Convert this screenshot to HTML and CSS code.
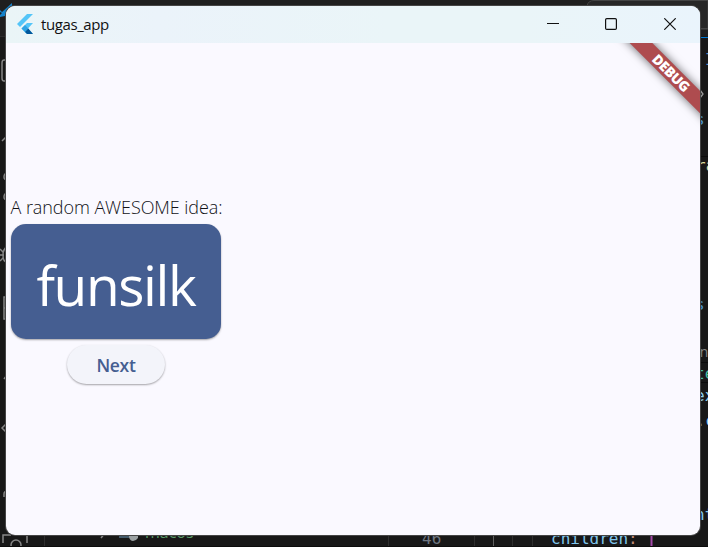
FILE: index.html
```html
<!DOCTYPE html>
<html lang="en">
<head>
<meta charset="utf-8">
<title>tugas_app</title>
<link rel="stylesheet" href="styles.css">
</head>
<body>
<svg class="editor" width="708" height="547" viewBox="0 0 708 547" aria-hidden="true">
  <rect width="708" height="547" fill="#181818"/>
  <rect width="708" height="36" fill="#1f1f1f"/>
  <path d="M587 6Q588 .5 594 .5H708V29H587z" fill="#272727" stroke="#444"/>
  <path d="M0 36.5H6" stroke="#2b2b2b"/>
  <path d="M0 10L2 12L12 3V20L5 16L0 17V15L2 13L0 12z" fill="#1382ca"/>
  <path d="M700 28.5H708" stroke="#454545"/>
  <path d="M700 37.5H708" stroke="#0078d4"/>
  <path d="M700 156.5H708M700 362.5H708M700 382.5H708" stroke="#0c0c0c"/>
  <g fill="none" stroke="#868686" stroke-width="1.5">
    <path d="M8 60H4Q2 60 2 63V78Q2 81 4 81H8M2 141L7 136M8 173Q4 173 4 177Q4 180 8 180M8 193Q4 193 4 197Q4 200 8 200"/>
    <path d="M0 249L3 252M0 255H4M0 261L3 258M7 247Q3 249 3 255Q3 262 7 262M8 297H4V319H8M4 308H8M4 379L7 375M7 423L2 428L7 433M4 497V494Q4 491 8 491"/>
    <path d="M3 543V535H11M20 535H27V543"/><circle cx="16" cy="545" r="5"/>
    <path d="M101 538L105 533"/>
  </g>
  <path d="M44.5 535V547M388.5 535V547M474.5 535V547M512.5 535V547M532.5 535V547" stroke="#2e2e2e"/>
  <path d="M493.5 535V547" stroke="#606060"/>
  <path d="M119 532H137V538H119z" fill="#42596a"/>
  <path d="M129 534H138V538Q136 541 133 541Q130 541 129 537z" fill="#9ca2a4"/>
  <text class="tree" x="145" y="538">macos</text>
  <g class="code">
    <text x="422" y="544" fill="#6e7681">46</text>
    <text x="551" y="544" fill="#7fc5ec">children<tspan fill="#c08a75">:</tspan></text>
    <text x="705" y="65" fill="#4a91ca">I</text>
    <text x="695" y="125" fill="#4a91ca">s</text>
    <text x="696" y="171" fill="#dcdca0">ra</text>
    <text x="695" y="310" fill="#4a91ca">s</text>
    <text x="695" y="379" fill="#43b99e">te</text>
    <text x="695" y="401" fill="#8bcdf0">ex</text>
    <text x="695.600" y="426" fill="#8bcdf0">.c</text>
    <text x="695" y="520" fill="#7fc5ec">nt</text>
  </g>
  <text class="lens" x="692" y="357">en</text>
  <path d="M700 90L703 94L700 98" fill="none" stroke="#999" stroke-width="1.3"/>
  <path d="M651.5 535V547" stroke="#a348a8" stroke-width="2"/>
  <path d="M0 546.5H708" stroke="#0c0c0c"/>
</svg>
<main class="window">
  <header class="titlebar">
    <svg class="logo" width="17" height="20" viewBox="0 0 17 20" aria-hidden="true">
      <path d="M10 0H16L3 13L0 10z" fill="#54c5f8"/>
      <path d="M10 9H16L11 14.5L16 20H10L4.500 14.500z" fill="#54c5f8"/>
      <path d="M4.500 14.500L8 11L11.300 14.500L8 18z" fill="#2fa3e4"/>
      <path d="M8 18L11.300 14.500L16 20H10z" fill="#01579b"/>
    </svg>
    <h1 class="title">tugas_app</h1>
    <div class="controls">
      <svg width="12" height="12" viewBox="0 0 12 12"><path d="M0 5.500H12"/></svg>
      <svg width="12" height="12" viewBox="0 0 12 12"><rect x=".6" y=".6" width="10.800" height="10.800" rx="1.200"/></svg>
      <svg width="12" height="12" viewBox="0 0 12 12"><path d="M.3 .3L11.700 11.700M11.700 .3L.3 11.700"/></svg>
    </div>
  </header>
  <section class="content">
    <p class="caption">A random AWESOME idea:</p>
    <div class="card">funsilk</div>
    <button class="next" type="button">Next</button>
    <div class="banner-clip"><div class="banner">DEBUG</div></div>
  </section>
</main>
</body>
</html>
```

FILE: styles.css
```css
* { box-sizing: border-box; }

body {
  margin: 0;
  padding: 6px;
  width: 708px;
  height: 547px;
  overflow: hidden;
  background: #181818;
  font-family: "Open Sans", "Noto Sans", sans-serif;
}

.editor { position: absolute; left: 0; top: 0; }
.code { font: 16px "DejaVu Sans Mono", monospace; }
.tree { font: 16px "Open Sans", sans-serif; fill: #5a9a68; }
.lens { font: 14px "Open Sans", sans-serif; fill: #858585; }

.window {
  position: relative;
  width: 694px;
  height: 529px;
  border-radius: 9px;
  overflow: hidden;
  background: #faf9ff;
  box-shadow: 0 0 0 1px #454545;
}

.titlebar {
  display: flex;
  align-items: center;
  height: 37px;
  padding: 0 24px 0 11px;
  background: linear-gradient(90deg, #eaf5f7, #ebf3fa 22%, #eaf5f8 55%, #eaf5f8 75%, #eaf4fc);
}

.logo { flex: none; margin-top: -1px; }

.title {
  margin: -2px 0 0 7px;
  font-size: 15px;
  font-weight: 400;
  line-height: 20px;
  letter-spacing: -0.4px;
  color: #111;
}

.controls {
  display: flex;
  gap: 47px;
  margin: -1px 0 0 auto;
}

.controls svg {
  fill: none;
  stroke: #111;
  stroke-width: 1.2;
}

.controls svg:first-child { margin-right: -1px; }

.content {
  position: relative;
  display: flex;
  flex-direction: column;
  align-items: center;
  justify-content: center;
  width: 220px;
  height: 492px;
}

.caption {
  margin: 0;
  height: 25px;
  padding-left: 1px;
  font-size: 18px;
  font-weight: 350;
  line-height: 24px;
  letter-spacing: -0.08px;
  white-space: nowrap;
  color: #101116;
}

.card {
  width: 210px;
  height: 115px;
  margin: 4px 5px 6px;
  border-radius: 15px;
  background: #455e91;
  color: #fff;
  font-size: 55px;
  letter-spacing: -1.4px;
  line-height: 122px;
  text-align: center;
  box-shadow: 0 1px 2px rgba(0, 0, 0, .35);
}

.next {
  width: 98px;
  height: 39px;
  padding: 0;
  border: 0;
  border-radius: 20px;
  background: #f3f4fa;
  color: #455e91;
  font: 600 17.5px/41px "Open Sans", sans-serif;
  letter-spacing: -0.3px;
  box-shadow: 0 1px 2px rgba(0, 0, 0, .35);
}

.banner-clip {
  position: absolute;
  left: 594px;
  top: 0;
  width: 100px;
  height: 100px;
  overflow: hidden;
}

.banner {
  position: absolute;
  left: -4px;
  top: 22px;
  width: 150px;
  height: 16px;
  transform: rotate(45deg);
  background: #ae4c4f;
  box-shadow: 0 0 10px rgba(0, 0, 0, .6);
  color: #fff;
  font-size: 14px;
  letter-spacing: -0.4px;
  font-weight: 800;
  line-height: 16px;
  text-align: center;
}
```
